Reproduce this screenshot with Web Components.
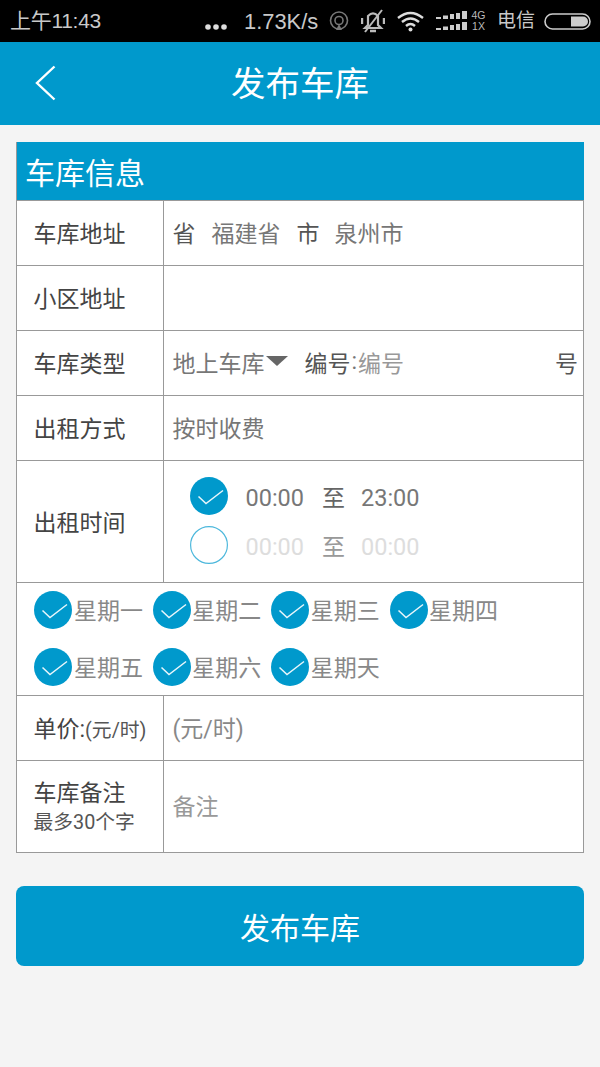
<!DOCTYPE html>
<html lang="zh"><head><meta charset="utf-8">
<style>
html,body{margin:0;padding:0;background:#f4f4f4}
body{width:600px;height:1067px;overflow:hidden;font-family:Roboto,"Noto Sans CJK SC",sans-serif;color:#444}
</style></head><body>
<status-bar></status-bar>
<app-header>发布车库</app-header>
<form-card title-text="车库信息">
  <form-row label="车库地址"><span style="color:#555">省</span><span style="margin-left:16px;color:#777">福建省</span><span style="margin-left:16px;color:#555">市</span><span style="margin-left:15px;color:#777">泉州市</span></form-row>
  <form-row label="小区地址"></form-row>
  <form-row label="车库类型"><span style="color:#777">地上车库</span><svg width="22" height="12" viewBox="0 0 22 12" style="margin:-1px 0 0 1px"><path d="M0 1h22L11 11z" fill="#666"/></svg><span style="margin-left:17px;color:#555">编号</span><span style="color:#777;margin:0 1px">:</span><span style="color:#999">编号</span><span style="margin-left:auto;margin-right:5px;color:#555">号</span></form-row>
  <form-row label="出租方式"><span style="color:#777">按时收费</span></form-row>
  <form-row label="出租时间" height="122">
    <div style="display:flex;flex-direction:column;gap:11px;padding-left:17px;margin-top:0">
      <time-line checked from="00:00" to="23:00"></time-line>
      <time-line from="00:00" to="00:00"></time-line>
    </div>
  </form-row>
  <week-days></week-days>
  <form-row label="单价:" unit="(元/时)"><span style="color:#888">(元/时)</span></form-row>
  <form-row label="车库备注" note="最多30个字" height="92" last><span style="color:#999">备注</span></form-row>
</form-card>
<primary-button>发布车库</primary-button>
<script>
function def(name,html){
  customElements.define(name,class extends HTMLElement{
    constructor(){super();this.attachShadow({mode:'open'});}
    connectedCallback(){this.shadowRoot.innerHTML=typeof html==='function'?html(this):html;}
  });
}
const tick=(s)=>`<svg width="${s}" height="${s}" viewBox="0 0 38 38" style="display:block;flex:none"><circle cx="19" cy="19" r="19" fill="#0099cc"/><path d="M8.500 19.500l7.500 7L33 13.500" fill="none" stroke="#e8f6fb" stroke-width="1.500"/></svg>`;
def('status-bar',`<style>
:host{display:flex;align-items:center;height:42px;background:#000;color:#c9c9c9;font-size:21px;box-sizing:border-box;padding-left:10px;font-family:"Liberation Sans","Noto Sans CJK SC",sans-serif}
span{display:block;line-height:42px;margin-top:-1px}
svg{display:block;flex:none}
</style>
<span style="width:195px;letter-spacing:-.3px">上午11:43</span>
<svg width="22" height="6" viewBox="0 0 22 6" style="margin-top:12px"><circle cx="3" cy="3" r="2.800" fill="#ddd"/><circle cx="11" cy="3" r="2.800" fill="#ddd"/><circle cx="19" cy="3" r="2.800" fill="#ddd"/></svg>
<span style="margin:1px 0 0 17px;width:85px;font-size:21.900px;white-space:nowrap">1.73K/s</span>
<svg width="20" height="20" viewBox="0 0 20 20"><circle cx="10" cy="9.500" r="8.500" fill="none" stroke="#777" stroke-width="1.600"/><circle cx="10" cy="9.500" r="4" fill="none" stroke="#777" stroke-width="1.600"/><path d="M7 19l3-6 3 6" fill="#777"/></svg>
<svg width="24" height="24" viewBox="0 0 24 24" style="margin-left:12px"><path d="M7 7q5-5 10 0v9l3 3H4l3-3z" fill="none" stroke="#bbb" stroke-width="2.200"/><path d="M1 9v6M23 9v6M9 22h6" stroke="#bbb" stroke-width="2.400"/><path d="M21 1L4 23" stroke="#bbb" stroke-width="2"/></svg>
<svg width="27" height="22" viewBox="0 0 27 22" style="margin-left:12px"><path d="M1 8q12.500-10 25 0M5 12q8.500-7 17 0M9 16q4.500-4 9 0" fill="none" stroke="#ddd" stroke-width="2.400"/><circle cx="13.500" cy="19.500" r="2" fill="#ddd"/></svg>
<svg width="31" height="20" viewBox="0 0 31 20" style="margin-left:12px"><g fill="#ccc"><rect x="0" y="6" width="5" height="2"/><rect x="7" y="4.500" width="5" height="3.500"/><rect x="14" y="3" width="4" height="5"/><rect x="20" y="2" width="4" height="6"/><rect x="26" y="0" width="5" height="8"/><rect x="0" y="17" width="5" height="2"/><rect x="7" y="15.500" width="5" height="3.500"/><rect x="14" y="14" width="4" height="5"/><rect x="20" y="13" width="4" height="6"/><rect x="26" y="11" width="5" height="8"/></g></svg>
<span style="margin-left:4px;font-size:10.500px;line-height:11.500px;color:#bbb;text-align:center;width:15px;margin-top:0">4G<br>1X</span>
<span style="margin:0 0 0 11px;font-size:19px;width:38px;white-space:nowrap">电信</span>
<svg width="47" height="17" viewBox="0 0 47 17" style="margin-left:9px"><rect x="1" y="1" width="45" height="15" rx="7.500" fill="none" stroke="#ccc" stroke-width="1.600"/><path d="M27 3.500h12a5 5 0 0 1 0 10H27z" fill="#ccc"/></svg>`);
def('app-header',`<style>
:host{display:flex;align-items:center;justify-content:center;position:relative;height:83px;background:#0099cc;color:#fff;font-size:34.500px}
svg{position:absolute;left:34px;top:23px}
div{margin-top:1px;line-height:1}
</style><svg width="24" height="36" viewBox="0 0 24 36"><path d="M20.500 1.500L3 18l17.500 16.500" fill="none" stroke="#fff" stroke-width="2.400"/></svg><div><slot></slot></div>`);
def('form-card',h=>`<style>
:host{display:block;margin:17px 16px 0;border:1px solid #999;border-top:0;border-bottom:0;background:#fff;box-sizing:border-box}
.t{height:58px;background:#0099cc;color:#fff;font-size:30px;display:flex;align-items:center;padding-left:8px;margin:0 -1px 0 0}
</style><div class="t">${h.getAttribute('title-text')}</div><slot></slot>`);
def('form-row',h=>{
 const ht=h.getAttribute('height')||65,u=h.getAttribute('unit'),n=h.getAttribute('note');
 return `<style>
:host{display:grid;grid-template-columns:147px 1fr;height:${ht}px;box-sizing:border-box;border-top:1px solid #999;${h.hasAttribute('last')?'border-bottom:1px solid #999;height:'+(+ht+1)+'px;':''}font-size:23px;color:#444}
.l{border-right:1px solid #999;display:flex;flex-direction:column;justify-content:center;padding:4px 0 0 16.500px;line-height:28px;box-sizing:border-box}
.l small{font-size:19.800px;line-height:29px;color:#555;white-space:nowrap}
.l u{text-decoration:none;font-size:19.800px;color:#555}
.v{display:flex;align-items:center;padding:0 0 3px 8.500px;min-width:0;white-space:nowrap;box-sizing:border-box}
</style><div class="l"><div>${h.getAttribute('label')}${u?`<u>${u}</u>`:''}</div>${n?`<small>${n}</small>`:''}</div><div class="v"><slot></slot></div>`});
def('time-line',h=>{
 const on=h.hasAttribute('checked');
 const c=on?'#777':'#ddd';
 const z=on?'#666':'#999';
 return `<style>
:host{display:flex;align-items:center;height:38px;font-size:23.500px;color:${c}}
span{display:block}
.n{margin-top:4px}
</style>${on?tick(38):'<svg width="38" height="38" viewBox="0 0 38 38" style="display:block;flex:none"><circle cx="19" cy="19" r="18.400" fill="none" stroke="#4db8dc" stroke-width="1.200"/></svg>'}
<span class="n" style="margin-left:18px;width:58px">${h.getAttribute('from')}</span><span style="margin-left:18.500px;width:21px;font-size:23px;color:${z}">至</span><span class="n" style="margin-left:18px">${h.getAttribute('to')}</span>`});
def('week-days',()=>{
 const d=['一','二','三','四','五','六','天'];
 return `<style>
:host{display:grid;grid-template-columns:repeat(4,118.400px);grid-auto-rows:57px;height:113px;box-sizing:border-box;border-top:1px solid #999;padding:8px 0 0 17.400px;align-content:start;font-size:23px;color:#888;white-space:nowrap}
div{display:flex;align-items:flex-start;gap:1.500px}
span{display:block;line-height:38px;margin-top:2px}
</style>${d.map(x=>`<div>${tick(38)}<span>星期${x}</span></div>`).join('')}`});
def('primary-button',`<style>
:host{display:flex;align-items:center;justify-content:center;height:80px;margin:33px 16px 0;background:#0099cc;color:#fff;font-size:30px;border-radius:8px}
</style><slot></slot>`);
</script>
</body></html>
